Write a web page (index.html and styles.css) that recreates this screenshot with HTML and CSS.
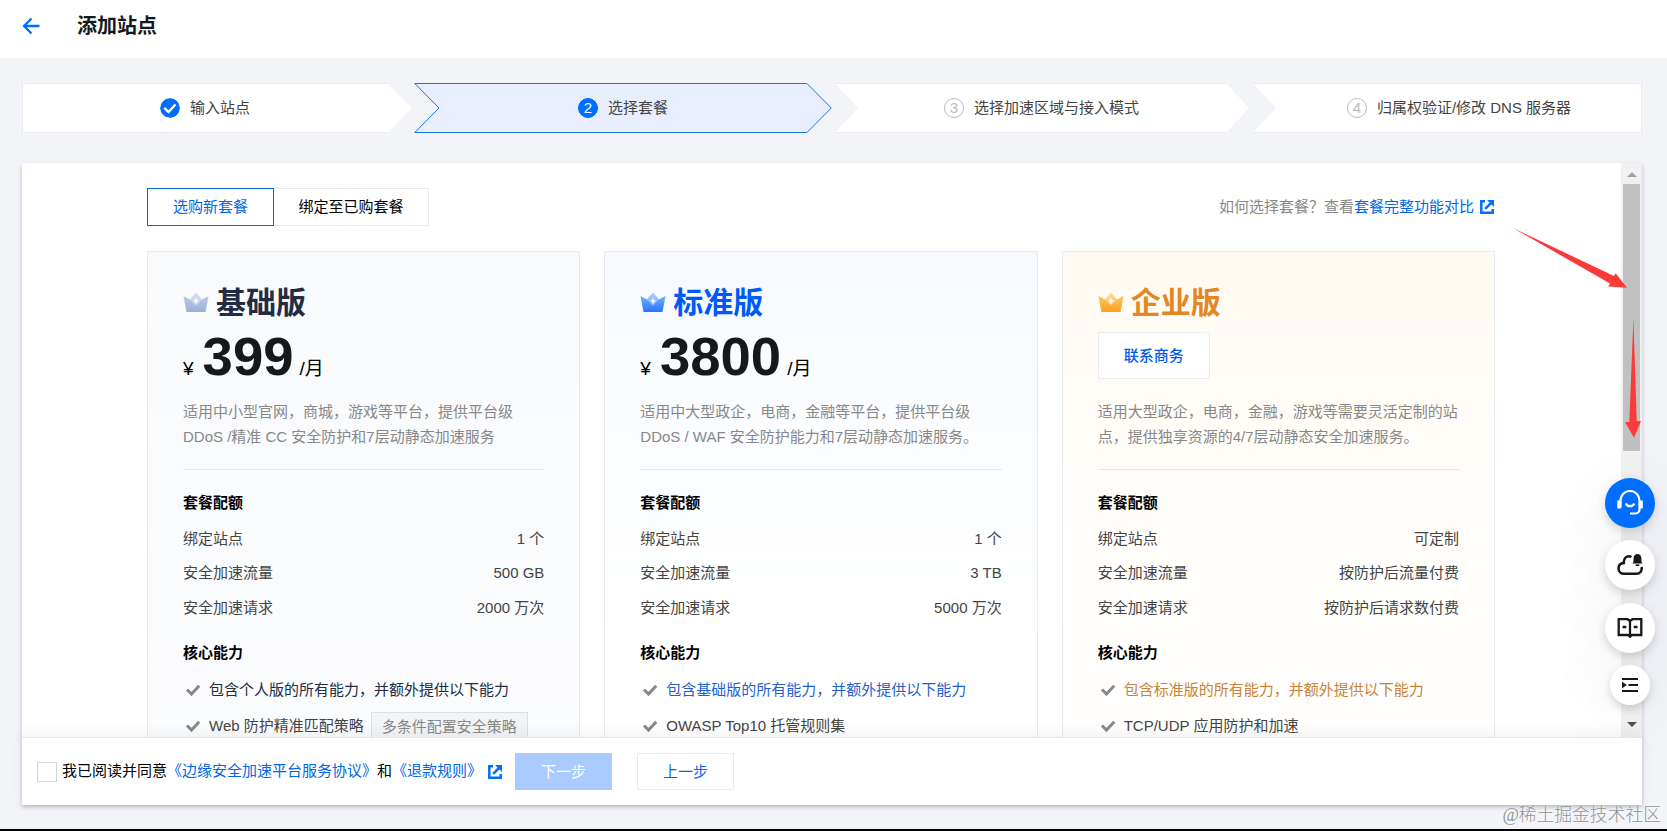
FILE: index.html
```html
<!DOCTYPE html>
<html lang="zh-CN">
<head>
    <meta charset="utf-8"/>
    <title>添加站点</title>
    <link rel="stylesheet" href="styles.css">
</head>
<body>
    <!-- shared icons -->
    <svg class="defs" width="0" height="0">
        <symbol id="check" viewBox="0 0 16 14">
            <path d="M2 6.5 L6.5 11 L14.2 2.8" fill="none" stroke="#888" stroke-width="3"/>
        </symbol>
        <symbol id="external" viewBox="0 0 14 14">
            <path d="M5 1.300H1.300V12.700H12.700V9M11.500 2.500L5.200 8.800" fill="none" stroke="#006eff" stroke-width="2.500"/>
            <path d="M7 0H14V7Z" fill="#006eff"/>
        </symbol>
    </svg>

    <header class="header">
        <svg class="back" width="18" height="18" viewBox="0 0 18 18"><path d="M9.500 1.500L2 9L9.500 16.500M2 9H17.500" fill="none" stroke="#006eff" stroke-width="2.300"/></svg>
        <h1>添加站点</h1>
    </header>

    <ol class="steps">
        <li class="step first">
            <svg class="shape" width="391" height="50"><path d="M.5 .5H366L390 25L366 49.500H.5Z" fill="#fff"/><path d="M366 .5H.5V49.500H366" fill="none" stroke="#e9ebee"/></svg>
            <svg class="num" width="20" height="20" viewBox="0 0 20 20"><circle cx="10" cy="10" r="10" fill="#006eff"/><path d="M4.300 9.800L8.500 14L15.500 6.500" fill="none" stroke="#fff" stroke-width="2.400"/></svg>
            <span class="name">输入站点</span>
        </li>
        <li class="step current">
            <svg class="shape" width="418" height="50"><path d="M.8 .5H393L417.300 25L393 49.500H.8L25 25Z" fill="#e8eefe" stroke="#1377e0"/></svg>
            <span class="num">2</span>
            <span class="name">选择套餐</span>
        </li>
        <li class="step third">
            <svg class="shape" width="414" height="50"><path d="M0 .5H391L414 25L391 49.500H0L23 25Z" fill="#fff"/><path d="M0 .5H391M0 49.500H391" stroke="#e9ebee"/></svg>
            <span class="num">3</span>
            <span class="name">选择加速区域与接入模式</span>
        </li>
        <li class="step last">
            <svg class="shape" width="389" height="50"><path d="M0 .5H388.500V49.500H0L23 25Z" fill="#fff"/><path d="M0 .5H388.500V49.500H0" fill="none" stroke="#e9ebee"/></svg>
            <span class="num">4</span>
            <span class="name">归属权验证/修改 DNS 服务器</span>
        </li>
    </ol>

    <main class="panel">
        <div class="scroll">
            <div class="content">
                <div class="toolbar">
                    <div class="tabs">
                        <a class="tab active">选购新套餐</a>
                        <a class="tab">绑定至已购套餐</a>
                    </div>
                    <p class="hint">如何选择套餐？查看<a>套餐完整功能对比</a><svg class="ext" width="14" height="14"><use href="#external"/></svg></p>
                </div>

                <div class="plans">
                    <section class="plan basic">
                        <h2>
                            <svg width="26" height="22" viewBox="0 0 26 22">
                                <linearGradient id="g1" x1="0" y1="0" x2="0" y2="1"><stop offset="0" stop-color="#c3d2e8"/><stop offset="1" stop-color="#98afd8"/></linearGradient>
                                <path d="M.5 5L7 8.500L13 1.500L19 8.500L25.500 5L22.500 21H3.500Z" fill="url(#g1)"/>
                                <path d="M13 1.500L7 8.500L13 15L19 8.500Z" fill="#fff" opacity=".3"/>
                                <path d="M13 6.500L14 9L16 10L14 11L13 13.500L12 11L10 10L12 9Z" fill="#fff"/>
                            </svg>
                            基础版
                        </h2>
                        <p class="price">¥<b>399</b>/月</p>
                        <p class="desc">适用中小型官网，商城，游戏等平台，提供平台级<br>DDoS /精准 CC 安全防护和7层动静态加速服务</p>
                        <h3>套餐配额</h3>
                        <dl>
                            <div><dt>绑定站点</dt><dd>1 个</dd></div>
                            <div><dt>安全加速流量</dt><dd>500 GB</dd></div>
                            <div><dt>安全加速请求</dt><dd>2000 万次</dd></div>
                        </dl>
                        <h3>核心能力</h3>
                        <ul>
                            <li class="base"><svg width="16" height="14"><use href="#check"/></svg>包含个人版的所有能力，并额外提供以下能力</li>
                            <li><svg width="16" height="14"><use href="#check"/></svg>Web 防护精准匹配策略<span class="tag">多条件配置安全策略</span></li>
                        </ul>
                    </section>

                    <section class="plan standard">
                        <h2>
                            <svg width="26" height="22" viewBox="0 0 26 22">
                                <linearGradient id="g2" x1="0" y1="0" x2="0" y2="1"><stop offset="0" stop-color="#86bdfa"/><stop offset="1" stop-color="#2377fb"/></linearGradient>
                                <path d="M.5 5L7 8.500L13 1.500L19 8.500L25.500 5L22.500 21H3.500Z" fill="url(#g2)"/>
                                <path d="M13 1.500L7 8.500L13 15L19 8.500Z" fill="#fff" opacity=".3"/>
                                <path d="M13 6.500L14 9L16 10L14 11L13 13.500L12 11L10 10L12 9Z" fill="#fff"/>
                            </svg>
                            标准版
                        </h2>
                        <p class="price">¥<b>3800</b>/月</p>
                        <p class="desc">适用中大型政企，电商，金融等平台，提供平台级<br>DDoS / WAF 安全防护能力和7层动静态加速服务。</p>
                        <h3>套餐配额</h3>
                        <dl>
                            <div><dt>绑定站点</dt><dd>1 个</dd></div>
                            <div><dt>安全加速流量</dt><dd>3 TB</dd></div>
                            <div><dt>安全加速请求</dt><dd>5000 万次</dd></div>
                        </dl>
                        <h3>核心能力</h3>
                        <ul>
                            <li class="base"><svg width="16" height="14"><use href="#check"/></svg>包含基础版的所有能力，并额外提供以下能力</li>
                            <li><svg width="16" height="14"><use href="#check"/></svg>OWASP Top10 托管规则集</li>
                        </ul>
                    </section>

                    <section class="plan enterprise">
                        <h2>
                            <svg width="26" height="22" viewBox="0 0 26 22">
                                <linearGradient id="g3" x1="0" y1="0" x2="0" y2="1"><stop offset="0" stop-color="#fbcc6c"/><stop offset="1" stop-color="#fba11f"/></linearGradient>
                                <path d="M.5 5L7 8.500L13 1.500L19 8.500L25.500 5L22.500 21H3.500Z" fill="url(#g3)"/>
                                <path d="M13 1.500L7 8.500L13 15L19 8.500Z" fill="#fff" opacity=".3"/>
                                <path d="M13 6.500L14 9L16 10L14 11L13 13.500L12 11L10 10L12 9Z" fill="#fff"/>
                            </svg>
                            企业版
                        </h2>
                        <div class="contact"><a>联系商务</a></div>
                        <p class="desc">适用大型政企，电商，金融，游戏等需要灵活定制的站<br>点，提供独享资源的4/7层动静态安全加速服务。</p>
                        <h3>套餐配额</h3>
                        <dl>
                            <div><dt>绑定站点</dt><dd>可定制</dd></div>
                            <div><dt>安全加速流量</dt><dd>按防护后流量付费</dd></div>
                            <div><dt>安全加速请求</dt><dd>按防护后请求数付费</dd></div>
                        </dl>
                        <h3>核心能力</h3>
                        <ul>
                            <li class="base"><svg width="16" height="14"><use href="#check"/></svg>包含标准版的所有能力，并额外提供以下能力</li>
                            <li><svg width="16" height="14"><use href="#check"/></svg>TCP/UDP 应用防护和加速</li>
                        </ul>
                    </section>
                </div>
            </div>
            <div class="scrollbar">
                <svg width="10" height="5"><path d="M0 5L5 0L10 5Z" fill="#a3a3a3"/></svg>
                <div class="thumb"></div>
                <svg class="down" width="10" height="5"><path d="M0 0L5 5L10 0Z" fill="#505050"/></svg>
            </div>
        </div>

        <footer class="footer">
            <label><i class="checkbox"></i><span>我已阅读并同意<a>《边缘安全加速平台服务协议》</a>和<a>《退款规则》</a></span></label>
            <svg class="ext" width="14" height="14"><use href="#external"/></svg>
            <a class="btn primary">下一步</a>
            <a class="btn">上一步</a>
        </footer>
    </main>

    <div class="bottom-line"></div>

    <aside class="float">
        <a class="service">
            <svg width="26" height="26" viewBox="0 0 26 26" fill="none" stroke="#fff" stroke-width="2.200"><path d="M3.500 17V10.500a9.500 9.500 0 0 1 19 0V19.500a4 4 0 0 1-4 4H13M8.800 13.500a4.600 4.600 0 0 0 8.400 0"/><path d="M2.200 10.500V18.500M23.800 10.500V18.500" stroke-width="4"/></svg>
        </a>
        <a>
            <svg width="26" height="24" viewBox="0 0 26 24"><path d="M14.500 3.800C10.500 2 7 4.500 6.800 8.500L6.800 10C3.500 10.300 1.500 12.300 1.500 15.200C1.500 18.500 4 20.800 7 20.800H19.500C23 20.800 25 18 24.800 14" fill="none" stroke="#16181b" stroke-width="2.500"/><path d="M15.500 10.500C17 9.500 16.300 7 16.600 4.800C16.800 2.500 18.500 1 20.500 1S24.200 2.500 24.400 4.800C24.700 7 24 9.500 25.500 10.500Z" fill="#16181b"/><path d="M18.700 12.200H22.300" stroke="#16181b" stroke-width="1.600"/></svg>
        </a>
        <a>
            <svg width="26" height="22" viewBox="0 0 26 22" fill="none" stroke="#16181b" stroke-width="2.300"><path d="M13 4L10.500 2.200H1.700V18H11L13 19.800L15 18H24.300V2.200H15.500L13 4V20.500M5.500 10H9.300M16.700 10H20.500"/></svg>
        </a>
        <a class="small">
            <svg width="16" height="16" viewBox="0 0 16 16"><path d="M0 2H16M6.500 8H16M0 14H16" stroke="#16181b" stroke-width="2"/><path d="M0 4.800L5 8L0 11.200Z" fill="#16181b"/></svg>
        </a>
    </aside>

    <!-- red pointers to the scrollbar -->
    <svg class="pointer" width="140" height="220" viewBox="1507 222 140 220" fill="#fb3a3a">
        <path d="M1513 228L1614 276L1615.700 273.300L1627 287.700L1608.300 286.500L1610 283.500Z"/>
        <path d="M1633.400 318L1636.700 421H1641L1634 437.700L1625 422H1629.300Z"/>
    </svg>

    <div class="watermark">@稀土掘金技术社区</div>
</body>
</html>
```
FILE: styles.css
```css
* {
    box-sizing: border-box;
    margin: 0;
    padding: 0;
}
body {
    position: relative;
    width: 1667px;
    height: 831px;
    overflow: hidden;
    background: #f3f4f8;
    color: #000;
    font: 15px/25px "Liberation Sans", "Noto Sans CJK SC", sans-serif;
}
a {
    color: #0067e6;
}
ul, ol {
    list-style: none;
}
.defs {
    position: absolute;
}

.header {
    display: flex;
    align-items: center;
    height: 58px;
    padding: 0 22px 7px;
    background: #fff;
}
.header h1 {
    margin: 1px 0 0 37px;
    font-size: 20px;
    color: #16181b;
}

/* steps */
.steps {
    display: flex;
    height: 50px;
    margin: 25px 25px 0 22px;
}
.step {
    position: relative;
    display: flex;
    align-items: center;
    justify-content: center;
    color: #444;
}
.step .name, .step .num {
    position: relative;
}
.step .name {
    padding-bottom: 2px;
}
.step .shape {
    position: absolute;
    left: 0;
    top: 0;
}
.step .num {
    width: 20px;
    height: 20px;
    margin-right: 10px;
    border-radius: 50%;
    line-height: 18px;
    text-align: center;
}
.step span.num {
    border: 1px solid #bbb;
    color: #bbb;
}
.step.current span.num {
    border-color: #006eff;
    background: #006eff;
    color: #fff;
}
.step.first {
    width: 391px;
    padding-right: 25px;
}
.step.current {
    width: 418px;
    margin-left: 1px;
}
.step.third {
    width: 414px;
    margin-left: 3px;
    padding-right: 1px;
}
.step.last {
    width: 389px;
    margin-left: 4px;
    padding-left: 23px;
}

/* panel */
.panel {
    width: 1620px;
    height: 642px;
    margin: 30px 0 0 22px;
    background: #fff;
    box-shadow: 0 2px 4px rgba(54, 58, 80, .3);
}
.scroll {
    display: flex;
    height: 574px;
    overflow: hidden;
}
.content {
    flex: 1;
    padding: 25px 126px 0 125px;
}
.toolbar {
    display: flex;
    justify-content: space-between;
    height: 38px;
}
.tabs {
    display: flex;
}
.tab {
    width: 155px;
    border: 1px solid #e7eaef;
    border-left: 0;
    color: #000;
    line-height: 35px;
    text-align: center;
}
.tab.active {
    width: 127px;
    border: 1px solid #0067d8;
    color: #0067e6;
}
.hint {
    margin-right: 1px;
    color: #888;
    line-height: 37px;
}
.ext {
    margin-left: 6px;
    vertical-align: -2px;
}

/* plans */
.plans {
    display: grid;
    grid-template-columns: repeat(3, 1fr);
    gap: 24px;
    margin-top: 25px;
}
.plan {
    height: 700px;
    padding: 28px 35px 0;
    border: 1px solid #e7eaef;
    background: linear-gradient(#f8fafc, #fdfdfe);
}
.plan h2 {
    display: flex;
    align-items: center;
    height: 44px;
    font-size: 30px;
    color: #232c43;
}
.plan h2 svg {
    margin-right: 7px;
}
.price {
    display: flex;
    align-items: baseline;
    height: 62px;
    font-size: 19px;
    line-height: 65px;
}
.price b {
    margin: 0 6px 0 9px;
    font-size: 54.500px;
    color: #16181b;
}
.contact {
    height: 62px;
    padding-top: 8px;
}
.contact a {
    display: block;
    width: 112px;
    height: 47px;
    border: 1px solid #e7eaef;
    background: #fff;
    color: #0059e8;
    font-weight: 500;
    line-height: 45px;
    text-align: center;
}
.desc {
    height: 71px;
    margin-top: 13px;
    border-bottom: 1px solid #e5e7ea;
    color: #888;
    white-space: nowrap;
}
.plan h3 {
    margin-top: 20px;
    font-size: 15px;
}
.plan dl {
    margin-top: 6.500px;
    color: #444;
}
.plan dl div {
    display: flex;
    justify-content: space-between;
    height: 34.600px;
    line-height: 34.600px;
}
.plan dl + h3 {
    margin-top: 15px;
}
.plan ul {
    margin-top: 6px;
    color: #444;
}
.plan li {
    display: flex;
    align-items: center;
    height: 36px;
    white-space: nowrap;
}
.plan li svg {
    margin: 2px 8px 0 2px;
}
.tag {
    height: 30px;
    margin: 4px 0 0 7px;
    padding: 0 10px;
    border: 1px solid #dcdfe4;
    background: #f3f4f7;
    color: #888;
    line-height: 27px;
}
.basic .base {
    color: #232c43;
}
.standard {
    background: linear-gradient(#f7fafe, #fff 55%);
}
.standard h2 {
    color: #0059f7;
}
.standard .base {
    color: #1f5fd0;
}
.enterprise {
    background: linear-gradient(#fffbf2, #fffefb 40%, #fff);
}
.enterprise h2 {
    color: #e38724;
}
.enterprise .base {
    color: #c88336;
}

/* scrollbar */
.scrollbar {
    display: flex;
    flex-direction: column;
    align-items: center;
    width: 21px;
    padding: 9px 0 10px;
    background: #f1f1f1;
}
.thumb {
    width: 17px;
    height: 267px;
    margin-top: 7px;
    background: #c1c1c1;
}
.scrollbar .down {
    margin-top: auto;
}

.footer {
    position: relative;
    display: flex;
    align-items: center;
    height: 68px;
    padding-left: 15px;
    border-top: 1px solid #e5e7ea;
    background: #fff;
    box-shadow: 0 -4px 12px rgba(54, 58, 80, .06);
}
.footer label {
    display: flex;
    align-items: center;
}
.footer label span {
    padding-bottom: 2px;
}
.checkbox {
    width: 20px;
    height: 20px;
    margin-right: 5px;
    border: 1px solid #cfd5de;
}
.btn {
    width: 97px;
    height: 37px;
    margin-left: 25px;
    border: 1px solid #e7eaef;
    line-height: 35px;
    text-align: center;
}
.btn.primary {
    margin-left: 13px;
    border-color: #a9cbff;
    background: #a9cbff;
    color: #fff;
}

.bottom-line {
    position: absolute;
    left: 0;
    bottom: 0;
    width: 100%;
    height: 2px;
    background: #000;
}

/* floating buttons */
.float {
    position: absolute;
    top: 478px;
    left: 1605px;
    display: flex;
    flex-direction: column;
    align-items: center;
    gap: 12.400px;
}
.float a {
    display: flex;
    align-items: center;
    justify-content: center;
    width: 50px;
    height: 50px;
    border-radius: 50%;
    background: #fff;
    box-shadow: 0 4px 10px rgba(54, 58, 80, .2), 0 10px 80px rgba(54, 58, 80, .1);
}
.float .service {
    background: #006eff;
}
.float .small {
    width: 40px;
    height: 40px;
}
.pointer {
    position: absolute;
    left: 1507px;
    top: 222px;
}
.watermark {
    position: absolute;
    right: 6px;
    bottom: 4px;
    color: #8f9195;
    font: 300 17.800px/24px "Liberation Serif", "Noto Sans CJK SC", serif;
    text-shadow: 0 0 2px #fff;
}
```
